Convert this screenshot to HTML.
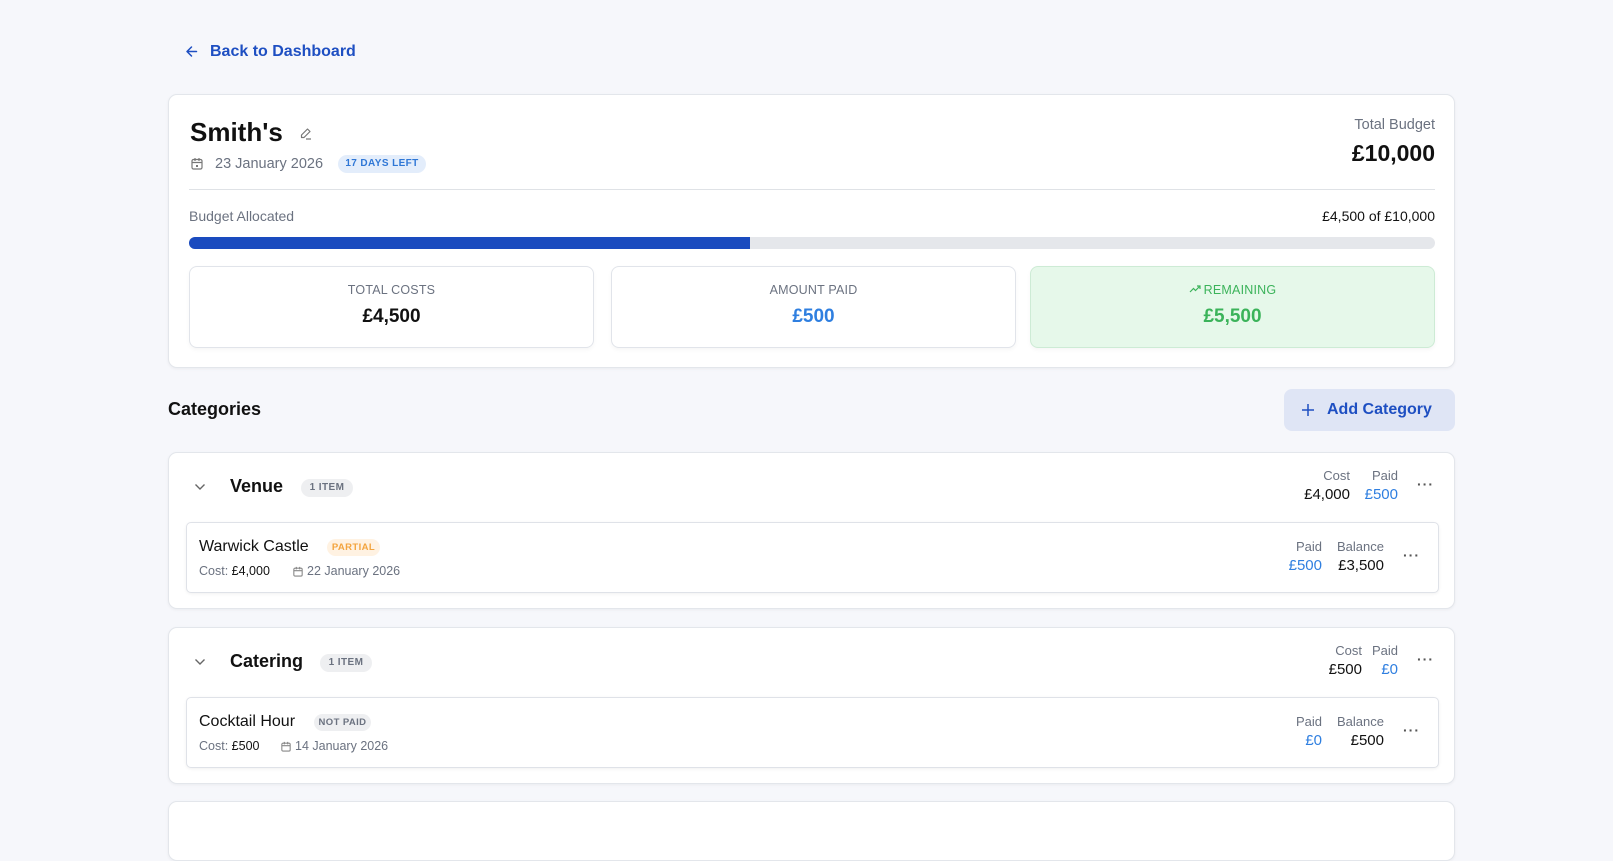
<!DOCTYPE html>
<html><head><meta charset="utf-8"><style>
*{box-sizing:border-box;margin:0;padding:0}
body{width:1613px;height:813px;overflow:hidden;background:#f6f7fb;font-family:"Liberation Sans",Arial,sans-serif;color:#111;position:relative}
.a{position:absolute}
.card{position:absolute;left:168px;width:1287px;background:#fff;border:1px solid #e3e6eb;border-radius:9px;box-shadow:0 1px 3px rgba(0,0,0,.05)}
.stat{position:absolute;top:171px;width:405px;height:82px;border:1px solid #e1e4ea;border-radius:8px;background:#fff;text-align:center;box-shadow:0 2px 4px rgba(0,0,0,.04)}
.stat .l{position:absolute;top:16px;left:0;right:0;font-size:12.5px;color:#6b7280;letter-spacing:.2px}
.stat .v{position:absolute;top:39px;left:0;right:0;font-size:19px;font-weight:bold}
.gray{color:#6b7280}
.badge{position:absolute;border-radius:10px;font-size:10px;font-weight:bold;letter-spacing:.4px;text-align:center}
.item{position:absolute;left:17px;width:1253px;height:71px;border:1px solid #dfe2e8;border-radius:5px;box-shadow:0 1px 3px rgba(0,0,0,.06);background:#fff}
.dots{position:absolute;font-size:14px;color:#555;letter-spacing:1px;font-weight:bold}
.r{text-align:right}
</style></head><body>

<svg class="a" style="left:185px;top:45px" width="13" height="13" viewBox="0 0 13 13"><path d="M11.5 6.5H2M6.5 2L2 6.5 6.5 11" fill="none" stroke="#1e4fc2" stroke-width="1.5" stroke-linecap="round" stroke-linejoin="round"/></svg>
<div class="a" style="left:210px;top:43px;font-size:16px;font-weight:bold;color:#1e4fc2">Back to Dashboard</div>

<div class="card" style="top:94px;height:274px">
  <div class="a" style="left:21px;top:22px;font-size:26px;font-weight:bold">Smith's</div>
  <svg class="a" style="left:130px;top:32px" width="13" height="13" viewBox="0 0 13 13"><path d="M8.5 2l2.5 2.5-6 6H2.5V8z M7 12h5" fill="none" stroke="#777" stroke-width="1.2" stroke-linejoin="round"/></svg>
  <svg class="a" style="left:22px;top:62px" width="12" height="13" viewBox="0 0 12 13"><rect x="1" y="2.5" width="10" height="9.5" rx="1.5" fill="none" stroke="#777" stroke-width="1.2"/><path d="M1 5.5h10M4 1v3M8 1v3" stroke="#777" stroke-width="1.2"/><rect x="5" y="8" width="2" height="2" fill="#777"/></svg>
  <div class="a gray" style="left:46px;top:61px;font-size:14.5px">23 January 2026</div>
  <div class="badge" style="left:169px;top:60px;width:88px;height:18px;line-height:18px;background:#e3edfb;color:#2f77d6">17 DAYS LEFT</div>
  <div class="a gray r" style="right:19px;top:22px;font-size:14.5px">Total Budget</div>
  <div class="a r" style="right:19px;top:45px;font-size:23px;font-weight:bold">£10,000</div>
  <div class="a" style="left:20px;right:19px;top:94px;height:1px;background:#dfe2e6"></div>
  <div class="a gray" style="left:20px;top:113px;font-size:14px">Budget Allocated</div>
  <div class="a r" style="right:19px;top:113px;font-size:14px">£4,500 of £10,000</div>
  <div class="a" style="left:20px;right:19px;top:142px;height:12px;border-radius:6px;background:#e5e7eb;overflow:hidden"><div style="width:45%;height:100%;background:#1a4bbf"></div></div>
  <div class="stat" style="left:20px"><div class="l">TOTAL COSTS</div><div class="v">£4,500</div></div>
  <div class="stat" style="left:442px"><div class="l">AMOUNT PAID</div><div class="v" style="color:#2f7fe0">£500</div></div>
  <div class="stat" style="left:861px;background:#e6f8ea;border-color:#cdebd5"><div class="l" style="color:#3bb35a"><svg width="12" height="9" viewBox="0 0 12 9" style="margin-right:3px"><path d="M1 7l3.5-3.5 2 2L11 1M8 1h3v3" fill="none" stroke="#3bb35a" stroke-width="1.2"/></svg>REMAINING</div><div class="v" style="color:#3bb35a">£5,500</div></div>
</div>

<div class="a" style="left:168px;top:399px;font-size:18px;font-weight:bold">Categories</div>
<div class="a" style="left:1284px;top:389px;width:171px;height:42px;border-radius:8px;background:#dfe5f5"></div>
<svg class="a" style="left:1302px;top:404px" width="12" height="12" viewBox="0 0 12 12"><path d="M6 0v12M0 6h12" stroke="#1e4fc2" stroke-width="1.5"/></svg>
<div class="a" style="left:1327px;top:401px;font-size:16px;font-weight:bold;color:#1e4fc2">Add Category</div>

<!-- Venue -->
<div class="card" style="top:452px;height:157px">
  <svg class="a" style="left:25px;top:30px" width="12" height="8" viewBox="0 0 12 8"><path d="M1.5 1.5L6 6l4.5-4.5" fill="none" stroke="#666" stroke-width="1.4"/></svg>
  <div class="a" style="left:61px;top:23px;font-size:18px;font-weight:bold">Venue</div>
  <div class="badge" style="left:132px;top:26px;width:52px;height:18px;line-height:18px;background:#eeeff1;color:#6b7280">1 ITEM</div>
  <div class="a gray r" style="right:104px;top:15px;font-size:13px">Cost</div>
  <div class="a r" style="right:104px;top:33px;font-size:15px">£4,000</div>
  <div class="a gray r" style="right:56px;top:15px;font-size:13px">Paid</div>
  <div class="a r" style="right:56px;top:33px;font-size:15px;color:#2f7fe0">£500</div>
  <div class="dots" style="right:20px;top:23px">···</div>
  <div class="item" style="top:69px">
    <div class="a" style="left:12px;top:15px;font-size:16px">Warwick Castle</div>
    <div class="badge" style="left:140px;top:16px;width:53px;height:17px;line-height:17px;background:#fff2e2;color:#f3a43e;font-size:9.5px">PARTIAL</div>
    <div class="a" style="left:12px;top:41px;font-size:12.5px"><span class="gray">Cost:</span> £4,000</div>
    <svg class="a" style="left:106px;top:43px" width="10" height="11" viewBox="0 0 12 13"><rect x="1" y="2.5" width="10" height="9.5" rx="1.5" fill="none" stroke="#888" stroke-width="1.3"/><path d="M1 5.5h10M4 1v3M8 1v3" stroke="#888" stroke-width="1.3"/></svg>
    <div class="a gray" style="left:120px;top:41px;font-size:12.5px">22 January 2026</div>
    <div class="a gray r" style="right:116px;top:16px;font-size:13px">Paid</div>
    <div class="a r" style="right:116px;top:34px;font-size:15px;color:#2f7fe0">£500</div>
    <div class="a gray r" style="right:54px;top:16px;font-size:13px">Balance</div>
    <div class="a r" style="right:54px;top:34px;font-size:15px">£3,500</div>
    <div class="dots" style="right:18px;top:24px">···</div>
  </div>
</div>

<!-- Catering -->
<div class="card" style="top:627px;height:157px">
  <svg class="a" style="left:25px;top:30px" width="12" height="8" viewBox="0 0 12 8"><path d="M1.5 1.5L6 6l4.5-4.5" fill="none" stroke="#666" stroke-width="1.4"/></svg>
  <div class="a" style="left:61px;top:23px;font-size:18px;font-weight:bold">Catering</div>
  <div class="badge" style="left:151px;top:26px;width:52px;height:18px;line-height:18px;background:#eeeff1;color:#6b7280">1 ITEM</div>
  <div class="a gray r" style="right:92px;top:15px;font-size:13px">Cost</div>
  <div class="a r" style="right:92px;top:33px;font-size:15px">£500</div>
  <div class="a gray r" style="right:56px;top:15px;font-size:13px">Paid</div>
  <div class="a r" style="right:56px;top:33px;font-size:15px;color:#2f7fe0">£0</div>
  <div class="dots" style="right:20px;top:23px">···</div>
  <div class="item" style="top:69px">
    <div class="a" style="left:12px;top:15px;font-size:16px">Cocktail Hour</div>
    <div class="badge" style="left:127px;top:16px;width:57px;height:17px;line-height:17px;background:#eeeff1;color:#6b7280;font-size:9.5px">NOT PAID</div>
    <div class="a" style="left:12px;top:41px;font-size:12.5px"><span class="gray">Cost:</span> £500</div>
    <svg class="a" style="left:94px;top:43px" width="10" height="11" viewBox="0 0 12 13"><rect x="1" y="2.5" width="10" height="9.5" rx="1.5" fill="none" stroke="#888" stroke-width="1.3"/><path d="M1 5.5h10M4 1v3M8 1v3" stroke="#888" stroke-width="1.3"/></svg>
    <div class="a gray" style="left:108px;top:41px;font-size:12.5px">14 January 2026</div>
    <div class="a gray r" style="right:116px;top:16px;font-size:13px">Paid</div>
    <div class="a r" style="right:116px;top:34px;font-size:15px;color:#2f7fe0">£0</div>
    <div class="a gray r" style="right:54px;top:16px;font-size:13px">Balance</div>
    <div class="a r" style="right:54px;top:34px;font-size:15px">£500</div>
    <div class="dots" style="right:18px;top:24px">···</div>
  </div>
</div>

<div class="card" style="top:801px;height:60px"></div>
</body></html>
